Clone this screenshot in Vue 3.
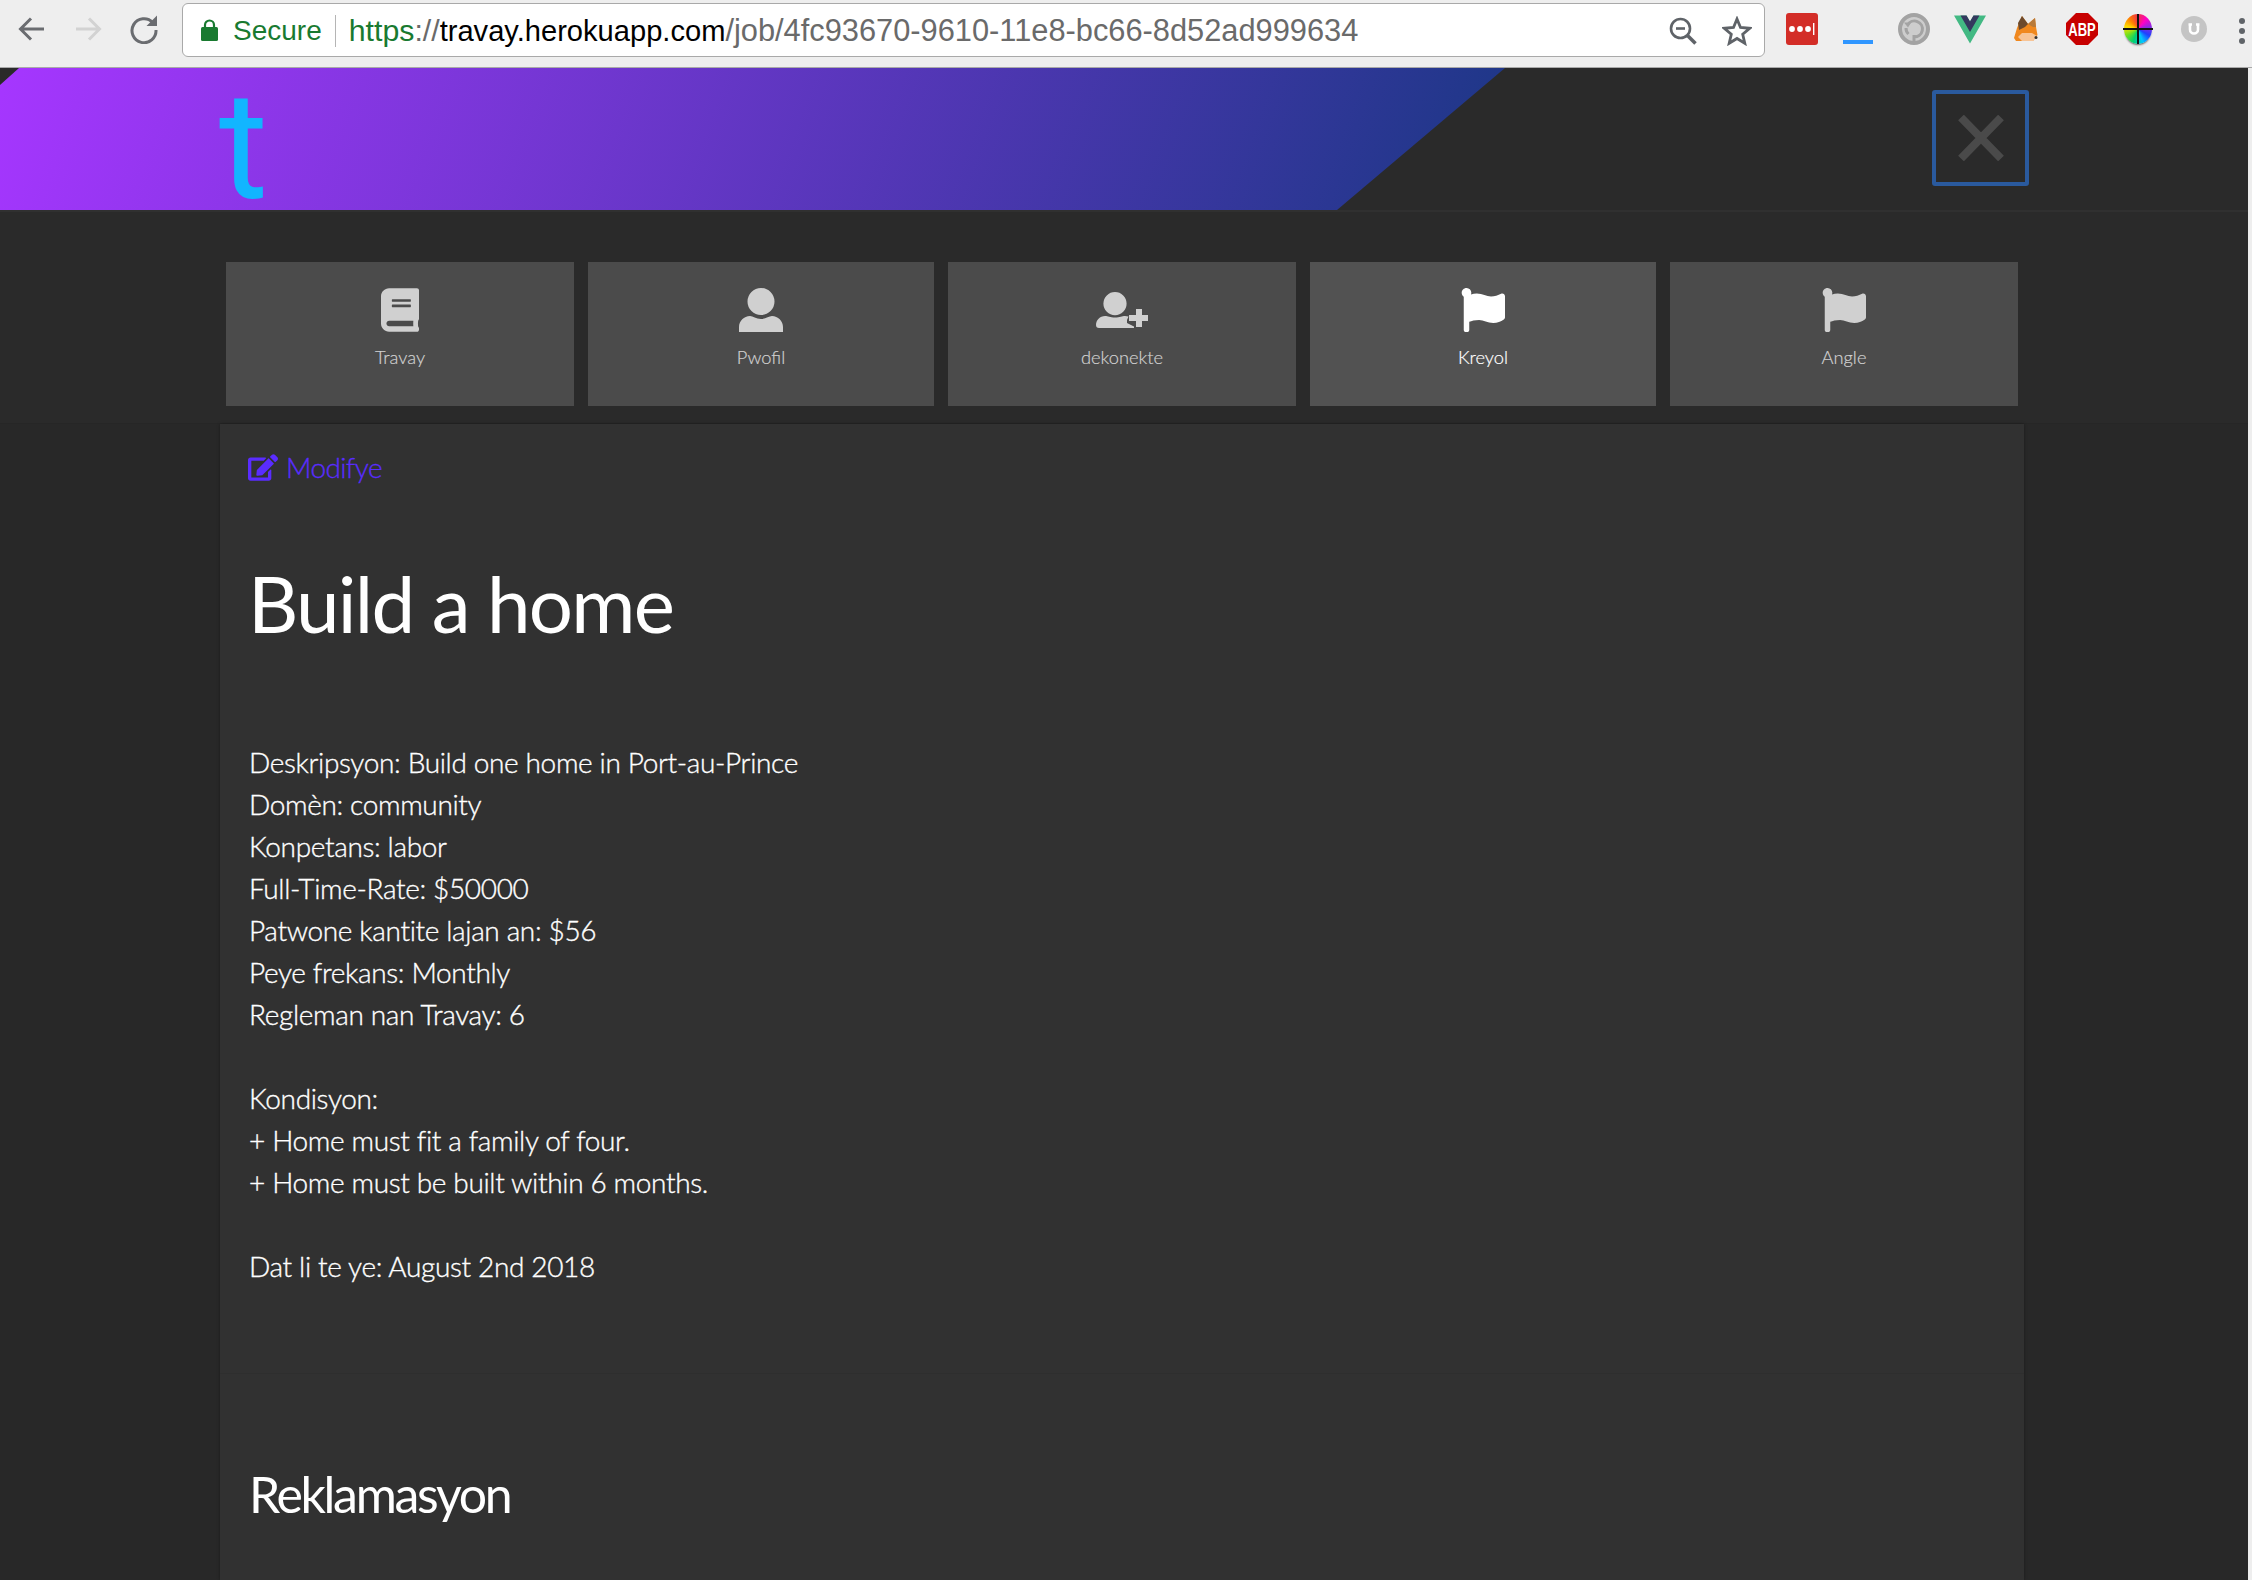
<script setup>
const flag = 'M349.565 98.783C295.978 98.783 251.721 64 184.348 64c-24.955 0-47.309 4.384-68.045 12.013a55.947 55.947 0 0 0 3.586-23.562C118.117 24.015 94.806 1.206 66.338.048 34.345-1.254 8 24.296 8 56c0 19.026 9.497 35.825 24 45.945V488c0 13.255 10.745 24 24 24h16c13.255 0 24-10.745 24-24v-94.4c28.311-12.064 63.582-22.122 114.435-22.122 53.588 0 97.844 34.783 165.217 34.783 48.169 0 86.667-16.294 122.505-40.858C506.84 359.452 512 349.571 512 339.045v-243.1c0-23.393-24.269-38.87-45.485-29.016-34.338 15.948-76.454 31.854-116.95 31.854z'
const tiles = [
  { label: 'Travay', vb: '0 0 448 512', w: 38, d: 'M448 360V24c0-13.3-10.7-24-24-24H96C43 0 0 43 0 96v320c0 53 43 96 96 96h328c13.3 0 24-10.7 24-24v-16c0-7.5-3.5-14.3-8.9-18.7-4.2-15.4-4.2-59.3 0-74.7 5.4-4.3 8.9-11.1 8.9-18.6zM128 134c0-3.3 2.7-6 6-6h212c3.3 0 6 2.7 6 6v20c0 3.3-2.7 6-6 6H134c-3.3 0-6-2.7-6-6v-20zm0 64c0-3.3 2.7-6 6-6h212c3.3 0 6 2.7 6 6v20c0 3.3-2.7 6-6 6H134c-3.3 0-6-2.7-6-6v-20zm253.4 250H96c-17.7 0-32-14.3-32-32 0-17.6 14.4-32 32-32h285.4c-1.9 17.1-1.9 46.9 0 64z' },
  { label: 'Pwofil', vb: '0 0 44 44', w: 44, d: 'M22 0a13.500 13.500 0 1 1 0 27a13.500 13.500 0 1 1 0-27zM0 44v-5c0-6 5-11 11-11c3 0 6 3 11 3s8-3 11-3c6 0 11 5 11 11v5z' },
  { label: 'dekonekte', vb: '0 -4 52 44', w: 52, d: 'M19 0a11.600 11.600 0 1 1 0 23.200a11.600 11.600 0 1 1 0-23.200zM3 36a3 3 0 0 1-3-3c0-5 4-9 9-9c3 0 5 1.500 10 1.500s7-1.500 10-1.500c1 0 2.500.2 3.500.6L31 28v3l7 3.500V36zM40 17h6v6h6v6h-6v6h-6v-6h-7v-6h7z' },
  { label: 'Kreyol', vb: '0 0 512 512', w: 44, active: true, d: flag },
  { label: 'Angle', vb: '0 0 512 512', w: 44, d: flag },
]
const lines = [
  'Deskripsyon: Build one home in Port-au-Prince',
  'Domèn: community',
  'Konpetans: labor',
  'Full-Time-Rate: $50000',
  'Patwone kantite lajan an: $56',
  'Peye frekans: Monthly',
  'Regleman nan Travay: 6',
  '',
  'Kondisyon:',
  '+ Home must fit a family of four.',
  '+ Home must be built within 6 months.',
  '',
  'Dat li te ye: August 2nd 2018',
]
</script>

<template>
  <div class="window">
    <div class="toolbar">
      <div class="tool">
        <svg width="30" height="30" viewBox="0 0 30 30"><path d="M27 15H4M14 4.500 3.500 15 14 25.500" fill="none" stroke="#6a6c70" stroke-width="3"/></svg>
      </div>
      <div class="tool">
        <svg width="30" height="30" viewBox="0 0 30 30"><path d="M3 15h23M16 4.500 26.500 15 16 25.500" fill="none" stroke="#d2d2d2" stroke-width="3"/></svg>
      </div>
      <div class="tool">
        <svg width="30" height="30" viewBox="0 0 30 30"><path d="M23.800 8.500A12 12 0 1 0 27 16" fill="none" stroke="#6a6c70" stroke-width="3"/><path d="M28 1.500V12H17.500z" fill="#6a6c70"/></svg>
      </div>
      <div class="omnibox">
        <svg class="lock" width="17" height="22" viewBox="0 0 17 22"><path d="M4 9V6a4.500 4.500 0 0 1 9 0v3" fill="none" stroke="#197a30" stroke-width="2.200"/><rect y="8" width="17" height="14" rx="1.500" fill="#197a30"/></svg>
        <span class="secure">Secure</span>
        <span class="divider"></span>
        <span class="url"><span class="green">https</span><span class="grey">://</span><span class="host">travay.herokuapp.com</span><span class="grey path">/job/4fc93670-9610-11e8-bc66-8d52ad999634</span></span>
        <svg class="omni-icon zoom-icon" width="28" height="28" viewBox="0 0 28 28"><circle cx="11.500" cy="11.500" r="9.500" fill="none" stroke="#5f6368" stroke-width="2.600"/><path d="M7 11.500h9" stroke="#5f6368" stroke-width="2.600"/><path d="m18.500 18.500 8 8" stroke="#5f6368" stroke-width="3.600"/></svg>
        <svg class="omni-icon" width="30" height="30" viewBox="0 0 30 30"><path d="m15 3 3.500 8.500 9.200.8-7 6 2.100 9L15 22.500l-7.800 4.800 2.100-9-7-6 9.200-.8z" fill="none" stroke="#5f6368" stroke-width="2.800" stroke-linejoin="miter"/></svg>
      </div>
      <div class="extensions">
        <div class="tool">
          <div class="lastpass"><svg width="32" height="32" viewBox="0 0 32 32"><circle cx="6" cy="16" r="2.900" fill="#fff"/><circle cx="14" cy="16" r="2.900" fill="#fff"/><circle cx="22" cy="16" r="2.900" fill="#fff"/><rect x="27" y="10" width="1.400" height="12" fill="#fff"/></svg></div>
        </div>
        <div class="tool">
          <svg class="dash" width="30" height="4" viewBox="0 0 30 4"><rect width="30" height="4" fill="#2f96ff"/></svg>
        </div>
        <div class="tool">
          <svg width="32" height="32" viewBox="0 0 32 32"><circle cx="16" cy="16" r="14" fill="#cdcdcd" stroke="#a3a3a3" stroke-width="4"/><path d="M9.500 12A8 8 0 1 1 16 24M16 22v8M10.500 21A8 8 0 0 1 8 15" fill="none" stroke="#a3a3a3" stroke-width="3"/><path d="M6 9.500h7l-3 5z" fill="#a3a3a3"/></svg>
        </div>
        <div class="tool">
          <svg width="32" height="30" viewBox="0 0 32 30"><path d="M0 1.500h12.500L16 7.500l3.500-6H32L16 29.500z" fill="#42b983"/><path d="M6.500 1.500h6L16 7.500l3.500-6h6L16 18z" fill="#34385e"/></svg>
        </div>
        <div class="tool">
          <svg width="24" height="26" viewBox="0 0 24 26"><path d="M8 0 14 8l7-6 1 9 1.500 8-4.500 6H2L0 22l3-10z" fill="#f0881e"/><path d="M8 0 4 7l1 7 6-3 3-3z" fill="#6d4a2c"/><path d="m21 2-7 6 5 3 3 0z" fill="#b87a3a"/><path d="M8 17h10l5 3-4 5H8l-4-4z" fill="#f7c496"/><circle cx="22" cy="21.500" r="1.500" fill="#333"/></svg>
        </div>
        <div class="tool">
          <svg width="32" height="32" viewBox="0 0 32 32"><path d="M10 0h12l10 10v12L22 32H10L0 22V10z" fill="#c70000"/><text class="abp" transform="translate(16 22.500) scale(1 1.450)" text-anchor="middle">ABP</text></svg>
        </div>
        <div class="tool">
          <div class="wheel"></div>
        </div>
        <div class="tool">
          <svg width="26" height="26" viewBox="0 0 26 26"><circle cx="13" cy="13" r="13" fill="#c4c4c4"/><path d="M7.500 8.500h3.500M15 8.500h3.500M9 8.500v5a4 4 0 0 0 8 0v-5" fill="none" stroke="#fff" stroke-width="2.600"/></svg>
        </div>
        <div class="dots"><i></i><i></i><i></i></div>
      </div>
    </div>

    <div class="site">
      <header class="site-head">
        <div class="brand"><span class="logo">t</span></div>
        <button class="close" type="button" aria-label="Close">
          <svg width="46" height="46" viewBox="0 0 46 46"><path d="M3 2.500 43 43.500M43 2.500 3 43.500" stroke="#4a4a4a" stroke-width="8" fill="none"/></svg>
        </button>
      </header>

      <nav class="tiles">
        <a v-for="t in tiles" :key="t.label" class="tile" :class="{ active: t.active }">
          <span class="tile-icon">
            <svg :width="t.w" height="44" :viewBox="t.vb" preserveAspectRatio="xMidYMid meet"><path :d="t.d" fill="currentColor"/></svg>
          </span>
          <span class="tile-label">{{ t.label }}</span>
        </a>
      </nav>

      <main class="content">
        <a class="edit">
          <svg width="30" height="27" viewBox="0 0 576 512"><path fill="currentColor" d="M402.600 83.200l90.200 90.200c3.800 3.800 3.800 10 0 13.800L274.400 405.600l-92.800 10.300c-12.400 1.400-22.900-9.100-21.500-21.500l10.300-92.800L388.800 83.200c3.800-3.800 10-3.800 13.800 0zm162-22.900l-48.800-48.800c-15.200-15.200-39.900-15.200-55.200 0l-35.400 35.400c-3.800 3.800-3.800 10 0 13.800l90.200 90.200c3.800 3.800 10 3.800 13.800 0l35.400-35.400c15.200-15.300 15.200-40 0-55.200zM384 346.200V448H64V128h229.800c3.200 0 6.200-1.300 8.500-3.500l40-40c7.600-7.600 2.200-20.500-8.500-20.500H48C21.500 64 0 85.500 0 112v352c0 26.500 21.500 48 48 48h352c26.500 0 48-21.500 48-48V306.200c0-10.700-12.900-16-20.500-8.500l-40 40c-2.200 2.300-3.500 5.300-3.500 8.500z"/></svg>
          <span>Modifye</span>
        </a>
        <h1 class="title">Build a home</h1>
        <div class="details">
          <p v-for="(l, i) in lines" :key="i" class="line">{{ l }}</p>
        </div>
        <hr class="rule" />
        <h2 class="subtitle">Reklamasyon</h2>
      </main>
    </div>
  </div>
</template>

<style>
html, body { margin: 0; background: #eeeeee; }
</style>

<style scoped>
.window {
  width: 2252px;
  height: 1580px;
  overflow: hidden;
  display: flex;
  flex-direction: column;
  background: #eeeeee;
}
.toolbar {
  box-sizing: border-box;
  height: 68px;
  flex: none;
  display: flex;
  align-items: flex-start;
  padding: 1px 0 0 4px;
  background: #eeeeee;
  border-bottom: 1px solid #a9a9a9;
}
.tool {
  width: 56px;
  height: 56px;
  flex: none;
  display: flex;
  align-items: center;
  justify-content: center;
}
.omnibox {
  box-sizing: border-box;
  width: 1583px;
  height: 54px;
  margin: 2px 9px 0 10px;
  flex: none;
  display: flex;
  align-items: center;
  padding: 2px 0 0 18px;
  background: #fff;
  border: 1px solid #a9a9a9;
  border-radius: 6px;
  font-family: "Liberation Sans", Arial, sans-serif;
  font-size: 28px;
}
.lock { flex: none; margin-top: -2px; }
.secure { margin-left: 15px; color: #197a30; }
.divider { width: 1px; height: 32px; margin: 0 13px; background: #b5b5b5; }
.url { font-size: 30.300px; white-space: nowrap; }
.green { color: #197a30; }
.grey { color: #6a6a6a; }
.host { color: #000; font-size: 29.100px; }
.path { font-size: 30.800px; }
.omni-icon { flex: none; margin-right: 12px; }
.zoom-icon { margin-left: auto; margin-right: 25px; }
.extensions {
  display: flex;
  align-items: flex-start;
  flex: none;
}
.lastpass {
  width: 32px;
  height: 32px;
  border-radius: 3px;
  background: #d32d27;
}
.dash { margin-top: 26px; }
.abp {
  font-family: "Liberation Sans", Arial, sans-serif;
  font-size: 13px;
  font-weight: 700;
  fill: #fff;
}
.wheel {
  position: relative;
  width: 28px;
  height: 30px;
  border-radius: 50%;
  background: conic-gradient(#f0304a, #ff00c8, #8a2be2, #2040ff, #00c8ff, #00d070, #70e020, #ffe000, #ff8000, #f0304a);
  box-shadow: 0 2px 2px -1px rgba(0, 0, 0, 0.6);
}
.wheel::before,
.wheel::after {
  content: "";
  position: absolute;
  background: #111;
}
.wheel::before { left: -1px; right: -1px; top: 14px; height: 2px; }
.wheel::after { top: 0; bottom: 0; left: 13px; width: 2px; }
.dots {
  display: flex;
  flex-direction: column;
  gap: 4px;
  margin: 17px 0 0 17px;
}
.dots i {
  width: 6px;
  height: 6px;
  border-radius: 50%;
  background: #5f6368;
}
.site {
  flex: 1;
  width: 2248px;
  display: flex;
  flex-direction: column;
  background: #282828;
  font-family: Lato, "Open Sans", sans-serif;
  font-weight: 300;
  color: #fff;
}
.site-head {
  box-sizing: border-box;
  height: 144px;
  flex: none;
  position: relative;
  display: flex;
  align-items: flex-start;
  justify-content: flex-end;
  background: #2a2a2a;
  border-bottom: 2px solid #303030;
}
.brand {
  position: absolute;
  left: 0;
  top: 0;
  width: 1505px;
  height: 142px;
  background: linear-gradient(110deg, #a636ff 0%, #1b3785 100%);
  clip-path: polygon(19px 0, 100% 0, 1337px 100%, 0 100%, 0 17px);
}
.logo {
  position: absolute;
  left: 219px;
  top: -11px;
  font-family: Roboto, sans-serif;
  font-size: 150px;
  font-weight: 400;
  line-height: 180px;
  color: #12b5ff;
}
.close {
  box-sizing: border-box;
  width: 97px;
  height: 96px;
  margin: 22px 219px 0 0;
  padding: 0;
  display: flex;
  align-items: center;
  justify-content: center;
  background: transparent;
  border: 4px solid #2a5a9e;
  border-radius: 3px;
}
.tiles {
  display: grid;
  grid-template-columns: 348px 346px 348px 346px 348px;
  gap: 14px;
  padding: 50px 0 17px 226px;
  background: #2a2a2a;
  border-bottom: 1px solid #262626;
}
.tile {
  height: 144px;
  box-sizing: border-box;
  padding-top: 26px;
  display: flex;
  flex-direction: column;
  align-items: center;
  background: #4b4b4b;
  color: #d0d0d0;
}
.tile.active { background: #525252; color: #fff; }
.tile-icon { height: 44px; display: flex; }
.tile-label {
  margin-top: 12px;
  font-size: 18.300px;
  line-height: 26px;
  font-weight: 300;
  -webkit-text-stroke: 0.2px currentColor;
}
.content {
  flex: 1;
  box-sizing: border-box;
  width: 1804px;
  margin-left: 220px;
  padding-top: 27px;
  background: #313131;
  box-shadow: 0 0 3px rgba(0, 0, 0, 0.35);
}
.edit {
  display: flex;
  align-items: center;
  gap: 8px;
  margin-left: 28px;
  height: 32px;
  color: #5a2cff;
  font-size: 28px;
  letter-spacing: -0.600px;
  -webkit-text-stroke: 0.3px currentColor;
}
.title {
  margin: 72px 0 0 28px;
  font-size: 78px;
  line-height: 96px;
  font-weight: 400;
  letter-spacing: -1.700px;
}
.details { margin: 90px 0 0 29px; }
.line {
  margin: 0;
  min-height: 42px;
  font-size: 28px;
  line-height: 42px;
  letter-spacing: -0.350px;
  -webkit-text-stroke: 0.35px #fff;
}
.rule {
  margin: 86px 0 0;
  border: 0;
  border-top: 1px solid #2e2e2e;
}
.subtitle {
  margin: 90px 0 0 29px;
  font-size: 50px;
  line-height: 60px;
  font-weight: 400;
  letter-spacing: -2.300px;
}
</style>
